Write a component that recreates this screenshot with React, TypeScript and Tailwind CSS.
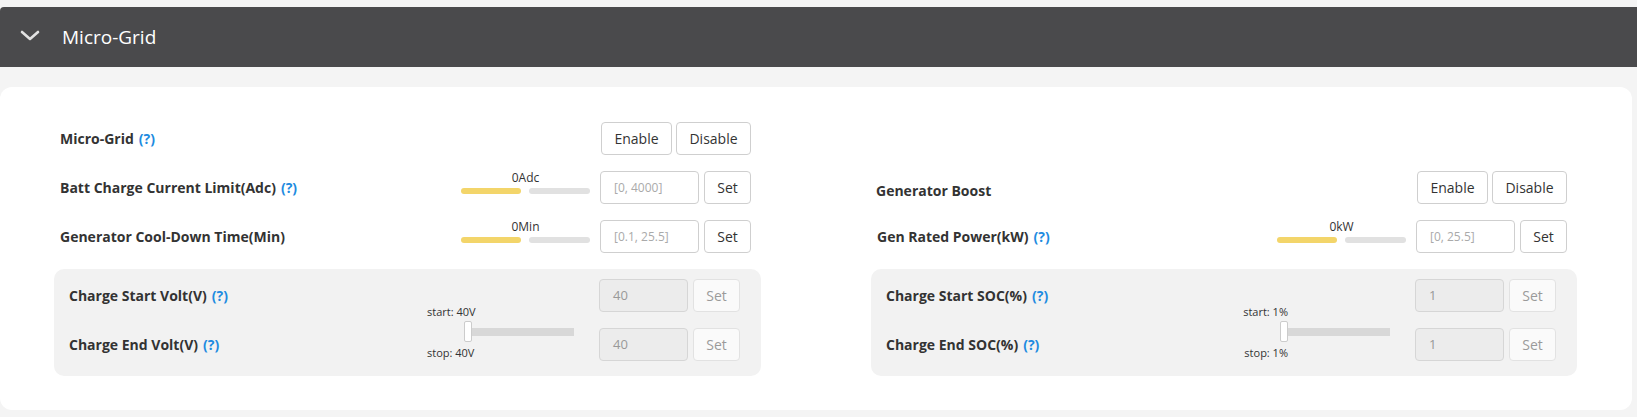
import React from "react";

const Help = () => (
  <span className="ml-[5px] text-[#1e8be0] font-bold">(?)</span>
);

const Label = ({ text, help = true }: { text: string; help?: boolean }) => (
  <div className="flex-1 text-[14px] font-bold text-[#333] whitespace-nowrap">
    {text}
    {help && <Help />}
  </div>
);

const Btn = ({ text, w }: { text: string; w: string }) => (
  <button
    className={`${w} h-[33px] bg-white border border-[#cfcfcf] rounded-[4px] text-[14px] text-[#333] flex items-center justify-center`}
  >
    {text}
  </button>
);

const EnableDisable = () => (
  <div className="flex gap-[4px]">
    <Btn text="Enable" w="w-[71px]" />
    <Btn text="Disable" w="w-[75px]" />
  </div>
);

const Slider = ({ value }: { value: string }) => (
  <div className="w-[129px] h-[33px] flex flex-col items-center">
    <div className="text-[12px] leading-[14px] text-[#333]">{value}</div>
    <div className="mt-[3px] w-full flex h-[6px]">
      <div className="w-[60px] h-[6px] rounded-full bg-[#f3d56a]" />
      <div className="flex-1 ml-[8px] h-[6px] rounded-full bg-[#e1e1e1]" />
    </div>
  </div>
);

const InputSet = ({ placeholder }: { placeholder: string }) => (
  <div className="flex gap-[5px]">
    <div className="w-[99px] h-[33px] bg-white border border-[#cfcfcf] rounded-[4px] pl-[13px] flex items-center text-[12px] text-[#aaa]">
      {placeholder}
    </div>
    <Btn text="Set" w="w-[47px]" />
  </div>
);

const SliderRow = ({
  label,
  help = true,
  value,
  placeholder,
}: {
  label: string;
  help?: boolean;
  value: string;
  placeholder: string;
}) => (
  <div className="h-[33px] flex items-center pl-[6px] pr-[10px]">
    <Label text={label} help={help} />
    <Slider value={value} />
    <div className="ml-[10px]">
      <InputSet placeholder={placeholder} />
    </div>
  </div>
);

const DisabledInputSet = ({ value }: { value: string }) => (
  <div className="flex gap-[5px]">
    <div className="w-[89px] h-[33px] bg-[#ececec] border border-[#d6d6d6] rounded-[4px] pl-[13px] flex items-center text-[13px] text-[#999]">
      {value}
    </div>
    <div className="w-[47px] h-[33px] bg-[#fafafa] border border-[#e2e2e2] rounded-[4px] flex items-center justify-center text-[14px] text-[#9a9a9a]">
      Set
    </div>
  </div>
);

const RangePanel = ({
  start,
  end,
  startTxt,
  stopTxt,
  value,
}: {
  start: string;
  end: string;
  startTxt: string;
  stopTxt: string;
  value: string;
}) => (
  <div className="bg-[#f2f2f2] rounded-[10px] pt-[10px] pb-[15px] pl-[15px] pr-[21px] flex">
    <div className="flex-1 flex flex-col gap-[16px]">
      <div className="h-[33px] flex items-center">
        <Label text={start} />
      </div>
      <div className="h-[33px] flex items-center">
        <Label text={end} />
      </div>
    </div>
    <div className="pt-[26px] w-[147px] flex flex-col">
      <div className="w-[45px] text-right text-[11px] leading-[14px] text-[#333] whitespace-nowrap">
        {startTxt}
      </div>
      <div className="mt-[2px] flex items-center h-[21px]">
        <div className="ml-[37px] w-[8px] h-[21px] bg-white border border-[#cccccc] rounded-[2px]" />
        <div className="w-[102px] h-[8px] bg-[#d8d8d8]" />
      </div>
      <div className="mt-[4px] w-[45px] text-right text-[11px] leading-[14px] text-[#333] whitespace-nowrap">
        {stopTxt}
      </div>
    </div>
    <div className="ml-[25px] flex flex-col gap-[16px]">
      <DisabledInputSet value={value} />
      <DisabledInputSet value={value} />
    </div>
  </div>
);

export default function App() {
  return (
    <div className="min-h-screen bg-[#f4f4f4] pt-[7px] [font-family:'Open_Sans','Noto_Sans',sans-serif]">
      <div className="h-[60px] bg-[#4a4a4c] rounded-tl-[4px] flex items-center pl-[20px]">
        <svg width="20" height="12" viewBox="0 0 20 12" className="mt-[-2px]">
          <polyline
            points="2,2 10,9 18,2"
            fill="none"
            stroke="#e2e2e2"
            strokeWidth="2.6"
            strokeLinecap="round"
            strokeLinejoin="round"
          />
        </svg>
        <div className="ml-[22px] text-[19px] text-white leading-none">Micro-Grid</div>
      </div>

      <div className="mt-[20px] w-[1632px] h-[323px] bg-white rounded-[12px] pt-[35px] pl-[54px]">
        <div className="grid grid-cols-[707px_706px] gap-x-[110px]">
          <div className="flex flex-col gap-[16px]">
            <div className="h-[33px] flex items-center pl-[6px] pr-[10px]">
              <Label text="Micro-Grid" />
              <EnableDisable />
            </div>
            <SliderRow
              label="Batt Charge Current Limit(Adc)"
              value="0Adc"
              placeholder="[0, 4000]"
            />
            <SliderRow
              label="Generator Cool-Down Time(Min)"
              help={false}
              value="0Min"
              placeholder="[0.1, 25.5]"
            />
            <RangePanel
              start="Charge Start Volt(V)"
              end="Charge End Volt(V)"
              startTxt="start: 40V"
              stopTxt="stop: 40V"
              value="40"
            />
          </div>

          <div className="flex flex-col gap-[16px]">
            <div className="h-[33px]" />
            <div className="h-[33px] flex items-center pl-[5px] pr-[10px]">
              <div className="flex-1 pt-[5px]">
                <Label text="Generator Boost" help={false} />
              </div>
              <EnableDisable />
            </div>
            <SliderRow
              label="Gen Rated Power(kW)"
              value="0kW"
              placeholder="[0, 25.5]"
            />
            <RangePanel
              start="Charge Start SOC(%)"
              end="Charge End SOC(%)"
              startTxt="start: 1%"
              stopTxt="stop: 1%"
              value="1"
            />
          </div>
        </div>
      </div>
    </div>
  );
}
